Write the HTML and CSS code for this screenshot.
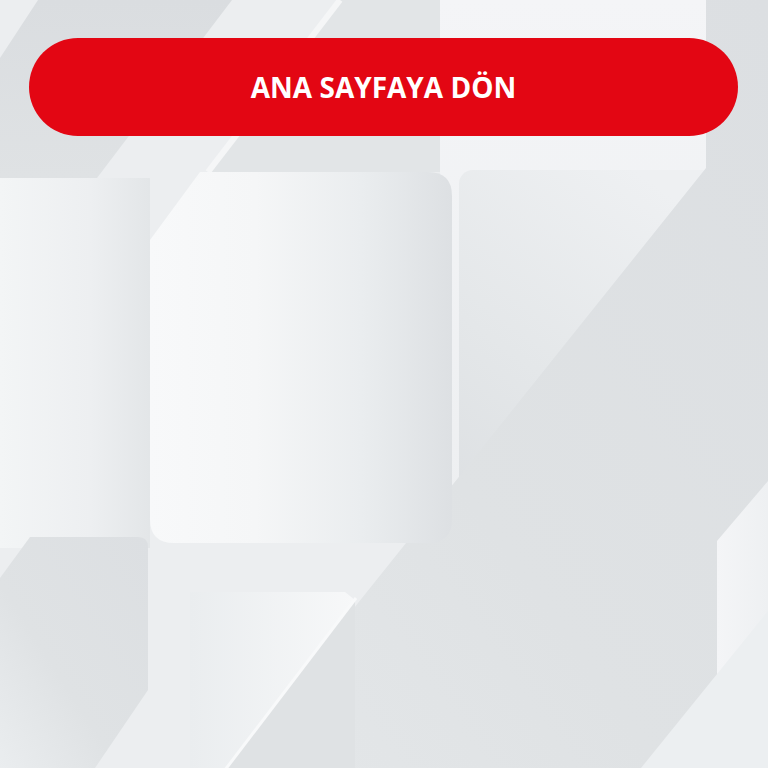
FILE: index.html
```html
<!DOCTYPE html>
<html lang="tr">
<head>
<meta charset="utf-8">
<title>Ana Sayfaya Dön</title>
<link rel="stylesheet" href="styles.css">
</head>
<body>
<div class="page">
  <svg class="bg-art" viewBox="0 0 768 768" width="768" height="768" aria-hidden="true">
    <defs>
      <linearGradient id="gTopLeft" x1="0" y1="0" x2="0" y2="1">
        <stop offset="0" stop-color="#dadde0"/>
        <stop offset="1" stop-color="#dfe2e4"/>
      </linearGradient>
      <linearGradient id="gLeft" x1="0" y1="0" x2="1" y2="0">
        <stop offset="0" stop-color="#f3f5f6"/>
        <stop offset="0.6" stop-color="#edeff1"/>
        <stop offset="1" stop-color="#e3e6e8"/>
      </linearGradient>
      <linearGradient id="gR1" x1="0" y1="0" x2="1" y2="0">
        <stop offset="0" stop-color="#f8f9fa"/>
        <stop offset="0.35" stop-color="#f5f6f7"/>
        <stop offset="0.7" stop-color="#eaedef"/>
        <stop offset="1" stop-color="#dde0e3"/>
      </linearGradient>
      <linearGradient id="gR2" x1="0" y1="1" x2="0.55" y2="0">
        <stop offset="0" stop-color="#dadde0"/>
        <stop offset="0.5" stop-color="#e4e7e9"/>
        <stop offset="1" stop-color="#eef0f2"/>
      </linearGradient>
      <linearGradient id="gDark" x1="1" y1="0" x2="0" y2="1">
        <stop offset="0" stop-color="#dcdfe2"/>
        <stop offset="0.6" stop-color="#dfe2e4"/>
        <stop offset="1" stop-color="#e4e7e9"/>
      </linearGradient>
      <linearGradient id="gR3" x1="1" y1="0" x2="0" y2="1">
        <stop offset="0" stop-color="#dcdfe2"/>
        <stop offset="0.6" stop-color="#dfe2e4"/>
        <stop offset="1" stop-color="#eaedef"/>
      </linearGradient>
      <linearGradient id="gR4" x1="0" y1="0" x2="1" y2="0">
        <stop offset="0" stop-color="#eaedef"/>
        <stop offset="1" stop-color="#f7f8f9"/>
      </linearGradient>
      <linearGradient id="gR5" x1="0" y1="0" x2="1" y2="0">
        <stop offset="0" stop-color="#f4f5f7"/>
        <stop offset="1" stop-color="#eef0f2"/>
      </linearGradient>
      <linearGradient id="gTopLight" x1="0" y1="0" x2="0" y2="1">
        <stop offset="0" stop-color="#f4f5f7"/>
        <stop offset="1" stop-color="#eceef0"/>
      </linearGradient>
    </defs>
    <rect x="0" y="0" width="768" height="768" fill="#eceef0"/>
    <rect x="0" y="178" width="150" height="370" fill="url(#gLeft)"/>
    <polygon points="38,0 232,0 97,178 0,178 0,58" fill="url(#gTopLeft)"/>
    <polygon points="340,0 440,0 440,172 208,172" fill="#e2e5e7"/>
    <line x1="340" y1="0" x2="208" y2="172" stroke="#f5f6f7" stroke-width="6"/>
    <rect x="440" y="0" width="266" height="600" fill="url(#gTopLight)"/>
    <rect x="459" y="170" width="320" height="414" rx="14" fill="url(#gR2)"/>
    <polygon points="706,0 768,0 768,768 226,768 706,168" fill="url(#gDark)"/>
    <path d="M200,172 H428 Q452,172 452,196 V519 Q452,543 428,543 H174 Q150,543 150,519 V240 Z" fill="url(#gR1)"/>
    <path d="M30,537 H138 Q148,537 148,547 V690 L95,768 H0 V578 Z" fill="url(#gR3)"/>
    <path d="M190,592 H345 L355,600 V768 H190 Z" fill="url(#gR4)"/>
    <polygon points="355,600 355,768 226,768" fill="#dfe2e4"/>
    <line x1="356" y1="598" x2="225" y2="770" stroke="#f8f9fa" stroke-width="3"/>
    <path d="M768,481 L717,541 V672 Q717,684 729,684 H768 Z" fill="url(#gR5)"/>
    <polygon points="768,611 768,768 641,768" fill="#eceff1"/>
  </svg>
  <main class="content">
    <a class="home-button" href="#">ANA SAYFAYA DÖN</a>
  </main>
</div>
</body>
</html>
```

FILE: styles.css
```css
html, body {
  margin: 0;
  padding: 0;
}

body {
  width: 768px;
  height: 768px;
  overflow: hidden;
  background: #eceef0;
  font-family: "Open Sans", "Noto Sans", sans-serif;
}

.page {
  position: relative;
  width: 768px;
  height: 768px;
}

.bg-art {
  position: absolute;
  left: 0;
  top: 0;
  display: block;
}

.content {
  position: relative;
  display: flex;
  flex-direction: column;
  padding: 38px 30px 0 29px;
}

.home-button {
  display: flex;
  align-items: center;
  justify-content: center;
  height: 98px;
  border-radius: 49px;
  background: #e30613;
  color: #ffffff;
  text-decoration: none;
  font-family: "Open Sans", "Noto Sans", sans-serif;
  font-weight: 700;
  font-size: 28px;
  letter-spacing: 0;
  line-height: 1;
}
```
